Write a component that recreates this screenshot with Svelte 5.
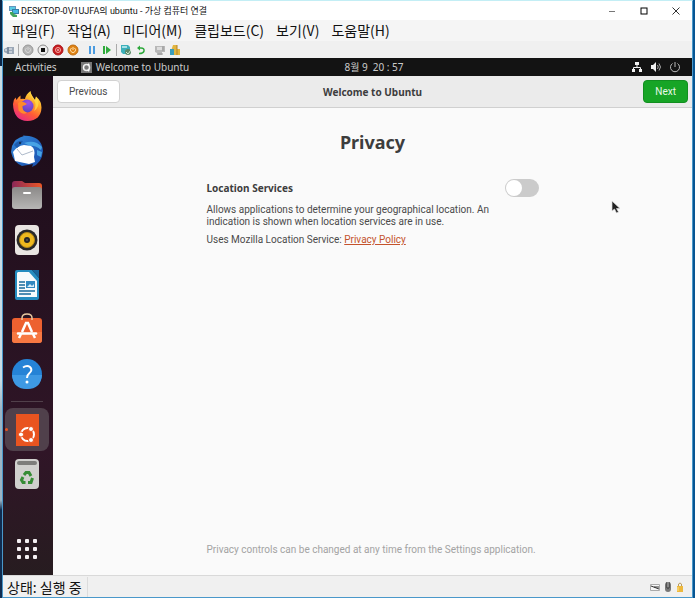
<script lang="ts">
	const menus = ["파일(F)", "작업(A)", "미디어(M)", "클립보드(C)", "보기(V)", "도움말(H)"];

	const apps = [
		{ id: "firefox", label: "Firefox" },
		{ id: "thunderbird", label: "Thunderbird" },
		{ id: "files", label: "Files" },
		{ id: "rhythmbox", label: "Rhythmbox" },
		{ id: "writer", label: "LibreOffice Writer" },
		{ id: "software", label: "Ubuntu Software" },
		{ id: "help", label: "Help" }
	];

	const cells = [0, 1, 2, 3, 4, 5, 6, 7, 8];

	let location = $state(false);
</script>

{#snippet appIcon(id : string)}
	<svg width="32" height="32" viewBox="0 0 32 32" aria-hidden="true">
		{#if id === "firefox"}
			<defs>
				<linearGradient id="ffBody" x1="0.85" y1="0" x2="0.25" y2="1">
					<stop offset="0" stop-color="#fff04a" />
					<stop offset="0.35" stop-color="#ffab2a" />
					<stop offset="0.65" stop-color="#ff5b35" />
					<stop offset="1" stop-color="#e8278b" />
				</linearGradient>
				<radialGradient id="ffCore" cx="0.6" cy="0.25" r="0.8">
					<stop offset="0" stop-color="#a050e8" />
					<stop offset="1" stop-color="#5743c0" />
				</radialGradient>
			</defs>
			<path d="M2 14 Q2 10 4.500 7.500 L5.500 10 Q7 7 9.500 5.500 L9.500 9 Q12 8.500 14 9 Q15 4 19.500 1 Q19.500 4 22 7 L24 10 L25 6.500 Q30.500 11 30.500 17.500 Q30 30.500 16.500 31 Q2.500 30.500 2 14Z" fill="url(#ffBody)" />
			<circle cx="16" cy="16" r="6.500" fill="url(#ffCore)" />
			<path d="M7 13 Q11 10 16 14 Q14 15.500 11.500 16 Q11 21 16 22.500 Q12 26 7.500 20.500Z" fill="#ff8a2a" />
			<path d="M19.500 1 Q19 6 23 10 Q26 15 23 21 Q29 17 27 10 L25 6.500 L24 10 Q20 6 19.500 1Z" fill="#ffe04a" opacity=".7" />
		{:else if id === "thunderbird"}
			<defs>
				<linearGradient id="tbBody" x1="0" y1="0" x2="1" y2="1">
					<stop offset="0" stop-color="#3489dc" />
					<stop offset="1" stop-color="#174caa" />
				</linearGradient>
			</defs>
			<path d="M0 17 L1 11 Q4 3 13 1 Q9 0 18 1 Q31 3 32 16 Q31 28 21 32 L22 29 L11 31 Q2 27 0 17Z" fill="url(#tbBody)" />
			<path d="M13 8 Q24 4 31 12 L30 15 Q24 10 19 11Z M26 15 L31 17 L30 22 L26 20Z" fill="#48a3e5" />
			<path d="M2 17 Q6 11 13 10 L20 11 Q25 14 23 22 L24 27 L18 29 L4 26 L3 21Z" fill="#fff" />
			<path d="M6 14 L11 20 L22 16" fill="none" stroke="#aebaca" />
			<path d="M3 10 Q7 5 12 6 Q10 10 6 13Z" fill="#1d5cae" />
			<circle cx="9" cy="8" r="1" fill="#10243c" />
		{:else if id === "files"}
			<defs>
				<linearGradient id="flBack">
					<stop offset="0" stop-color="#8b2858" />
					<stop offset="1" stop-color="#ec5726" />
				</linearGradient>
				<linearGradient id="flFront" x2="0" y2="1">
					<stop offset="0" stop-color="#8b8988" />
					<stop offset="1" stop-color="#b7b6b5" />
				</linearGradient>
			</defs>
			<path d="M1 5 Q1 2 4 2 H11 L14 4 H28 Q31 4 31 7 V14 H1Z" fill="url(#flBack)" />
			<rect x="1" y="8" width="30" height="22" rx="3" fill="url(#flFront)" />
			<rect x="12" y="13" width="8" height="2" rx="1" fill="#fff" />
		{:else if id === "rhythmbox"}
			<rect x="4" y="1" width="24" height="30" rx="4" fill="#e9e5e2" />
			<circle cx="16" cy="16" r="10.500" fill="#292929" />
			<circle cx="16" cy="16" r="7.500" fill="#eeb91e" stroke="#b78a17" />
			<circle cx="16" cy="16" r="3" fill="#272727" />
			<circle cx="16" cy="16" r="1" fill="#555" />
		{:else if id === "writer"}
			<path d="M6 1 H21 L28 9 V29 Q28 31 26 31 H6 Q4 31 4 29 V3 Q4 1 6 1Z" fill="#258cc0" />
			<path d="M7 3 H18 L26 12 V28 H6 V4Z" fill="#f7fafc" />
			<path d="M21 1 H28 V9Z" fill="#17649a" />
			<path d="M8 13 H14 M8 16 H14 M8 19 H14 M8 22 H24 M8 25 H20" stroke="#18699b" stroke-width="1.500" />
			<rect x="15" y="12" width="9" height="7" fill="#3288bf" />
			<path d="M16 18 L19 15 L21 17 L23 15 V18Z" fill="#d9edf8" />
		{:else if id === "software"}
			<rect x="1" y="5" width="30" height="25" rx="3" fill="#ed6130" />
			<path d="M1 19 H31 V27 Q31 30 28 30 H4 Q1 30 1 27Z" fill="#f77842" />
			<path d="M11 7 V5 Q11 1 16 1 Q21 1 21 5 V7" fill="none" stroke="#e8c8a0" stroke-width="1.500" />
			<path d="M11 19 L15 10 H17 L21 19" fill="none" stroke="#fff" stroke-width="2.500" />
			<path d="M7 20.500 H25" stroke="#fff" stroke-width="2.500" stroke-linecap="round" />
			<path d="M10 21 L8 25 M22 21 L24 25" stroke="#fff" stroke-width="2.500" />
		{:else if id === "help"}
			<circle cx="16" cy="16" r="15" fill="#2583d6" />
			<path d="M1 17 H31 Q30 31 16 31 Q2 31 1 17Z" fill="#3e99e4" />
			<path d="M12 9.500 Q16 7 19 9 Q22 12 18.500 15 Q16 17 16 20" fill="none" stroke="#fff" stroke-width="2" />
			<circle cx="16" cy="24" r="1.500" fill="#fff" />
		{:else if id === "ubuntu"}
			<path d="M5 0 H28 V32 H5Z" fill="#e95420" />
			<circle cx="16.500" cy="20.500" r="6.500" fill="none" stroke="#fff" stroke-width="2" />
			<g fill="#fff" stroke="#e95420">
				<circle cx="10" cy="20.500" r="2.500" />
				<circle cx="20" cy="15" r="2.500" />
				<circle cx="20" cy="26" r="2.500" />
			</g>
		{:else}
			<rect x="4" y="1" width="24" height="30" rx="4" fill="#d0d0ce" />
			<rect x="6" y="3" width="20" height="4" rx="2" fill="#7d7d7b" />
			<g fill="none" stroke="#358c35" stroke-width="3">
				<path d="M13 17 L15 14.500 H18 L20 18" />
				<path d="M21.500 20 L20 24.500 H17" />
				<path d="M14.500 24.500 H12 L10.500 22 L12 19" />
			</g>
		{/if}
	</svg>
{/snippet}

<div class="desktop">
	<div class="window">
		<header class="titlebar">
			<svg class="vm-icon" width="12" height="12" viewBox="0 0 12 12" aria-hidden="true">
				<path d="M1 1 H8 V6 H1Z" fill="#6595bc" />
				<path d="M2 2 H7 V5 H2Z" fill="#58cce4" />
				<path d="M4 4 H11 V9 H4Z" fill="#367da9" />
				<path d="M5 5 H10 V8 H5Z" fill="#46b9e2" />
				<path d="M2 7 L5 7 L6 9 L9 10 V12 H5 L2 9Z" fill="#43a45b" />
			</svg>
			<span class="window-title">DESKTOP-0V1UJFA의 ubuntu - 가상 컴퓨터 연결</span>
			<div class="window-buttons">
				<button aria-label="최소화"><svg width="8" height="8"><path d="M1 4.500 H7" stroke="#777" /></svg></button>
				<button aria-label="최대화"><svg width="8" height="8"><rect x="1" y="1" width="6" height="6" fill="none" stroke="#000" /></svg></button>
				<button aria-label="닫기"><svg width="8" height="8"><path d="M0.500 0.500 L7.500 7.500 M7.500 0.500 L0.500 7.500" stroke="#333" /></svg></button>
			</div>
		</header>

		<nav class="menubar">
			{#each menus as menu}
				<button>{menu}</button>
			{/each}
		</nav>

		<div class="toolbar">
			<button aria-label="Ctrl+Alt+Del">
				<svg width="12" height="12"><path d="M1 5 L5 3 L11 3 V10 H5 L1 8Z" fill="#9ca8b7" /><path d="M2 6 H4 M6 5 H9 M6 8 H9" stroke="#f4f6fa" /><path d="M5 3 V10" stroke="#5f7087" /></svg>
			</button>
			<span class="divider"></span>
			<button aria-label="시작">
				<svg width="12" height="12"><circle cx="6" cy="6" r="5" fill="#b4b4b4" stroke="#989898" /><path d="M4.500 4 A2.500 2.500 0 1 0 7.500 4 M6 3 V6" fill="none" stroke="#d5d5d5" /></svg>
			</button>
			<button aria-label="끄기">
				<svg width="12" height="12"><circle cx="6" cy="6" r="5" fill="#eee" stroke="#888" /><path d="M4 4 H8 V8 H4Z" fill="#111" /></svg>
			</button>
			<button aria-label="종료">
				<svg width="12" height="12"><circle cx="6" cy="6" r="5" fill="#c91c20" stroke="#a91418" /><circle cx="6" cy="6" r="2.500" fill="none" stroke="#f6b0a7" /><path d="M5 6 H7" stroke="#fff" /></svg>
			</button>
			<button aria-label="저장">
				<svg width="12" height="12"><circle cx="6" cy="6" r="5" fill="#df8213" stroke="#bd6c12" /><path d="M4.500 4 A2.500 2.500 0 1 0 7.500 4 M6 3 V6" fill="none" stroke="#ffe1ae" /></svg>
			</button>
			<span class="divider blank"></span>
			<button aria-label="일시 중지">
				<svg width="12" height="12"><path d="M3 2 H5 V10 H3Z M7 2 H9 V10 H7Z" fill="#4b9be0" /></svg>
			</button>
			<button aria-label="다시 설정">
				<svg width="12" height="12"><path d="M2 2 H4 V10 H2Z M5 2 L10 6 L5 10Z" fill="#2faa3c" /></svg>
			</button>
			<span class="divider"></span>
			<button aria-label="검사점">
				<svg width="12" height="12"><path d="M1 1 H8 L10 3 V10 H3 L1 8Z" fill="#3cafba" /><path d="M2 2 H7 V4 H2Z" fill="#a6e1e6" /><circle cx="8" cy="8" r="3" fill="#5a8869" /><path d="M6 8 L8 10 L11 6" fill="none" stroke="#d3ebd7" /></svg>
			</button>
			<button aria-label="되돌리기">
				<svg width="12" height="12"><path d="M4 4 H6 Q9.500 4 9 7 Q8.500 9.500 4 9.500" fill="none" stroke="#2da83b" stroke-width="1.500" /><path d="M2 4 L5 1.500 V6.500Z" fill="#2da83b" /></svg>
			</button>
			<span class="divider blank"></span>
			<button aria-label="고급 세션">
				<svg width="12" height="12"><path d="M1 2 H11 V8 H8 V11 H3 V9 L1 8Z" fill="#b8b8b8" /><path d="M3 3 H8 V6 H3Z" fill="#ddd" /><path d="M9 2 V7 M4 10 H9" stroke="#999" /></svg>
			</button>
			<button aria-label="공유">
				<svg width="12" height="12"><path d="M4 1 H8 V5 H11 V11 H5 V7 H2Z" fill="#e2b641" /><path d="M1 5 H5 V11 H1Z" fill="#3a9dbc" /><path d="M8 1 V11" stroke="#b58226" /></svg>
			</button>
		</div>

		<section class="guest">
			<div class="topbar">
				<div class="topbar-left">
					<button>Activities</button>
					<button class="app-menu">
						<svg width="11" height="11" aria-hidden="true">
							<rect width="11" height="11" fill="#777" />
							<circle cx="5.500" cy="5.500" r="3" fill="none" stroke="#eee" stroke-width="1.500" />
							<path d="M2 5.500 H3 M7 2 L8 3 M7 9 L8 8" stroke="#fff" stroke-width="2" />
						</svg>
						Welcome to Ubuntu
					</button>
				</div>
				<time>8월 9&ensp;20 : 57</time>
				<div class="tray">
					<svg width="12" height="12" aria-hidden="true"><path d="M4 1 H8 V4 H4Z M1 8 H4 V11 H1Z M8 8 H11 V11 H8Z" fill="#f1f1f1" /><path d="M6 4 V6 M2.500 8 V6.500 H9.500 V8" fill="none" stroke="#f1f1f1" /></svg>
					<svg width="12" height="12" aria-hidden="true"><path d="M1 4 H3 L6 1 V11 L3 8 H1Z" fill="#f1f1f1" /><path d="M7.500 4 Q9 6 7.500 8 M9 2.500 Q12 6 9 9.500" fill="none" stroke="#aaa" /></svg>
					<svg width="12" height="12" aria-hidden="true"><path d="M3.500 2.500 A4.500 4.500 0 1 0 8.500 2.500 M6 1 V6" fill="none" stroke="#bbb" /></svg>
				</div>
			</div>

			<div class="session">
				<aside class="dock">
					<div class="favorites">
						{#each apps as app}
							<button aria-label={app.label}>{@render appIcon(app.id)}</button>
						{/each}
					</div>
					<hr />
					<button class="running" aria-label="Welcome to Ubuntu">{@render appIcon("ubuntu")}</button>
					<button class="trash" aria-label="Trash">{@render appIcon("trash")}</button>
					<button class="show-apps" aria-label="Show Applications">
						<svg width="22" height="22" aria-hidden="true">
							{#each cells as cell}
								<rect x={(cell % 3) * 8 + 1} y={Math.floor(cell / 3) * 8 + 1} width="4" height="4" rx="1" fill="#f5f0f3" />
							{/each}
						</svg>
					</button>
				</aside>

				<main>
					<div class="headerbar">
						<button class="action">Previous</button>
						<h1>Welcome to Ubuntu</h1>
						<button class="action next">Next</button>
					</div>

					<div class="page">
						<h2>Privacy</h2>
						<div class="setting">
							<label for="location">Location Services</label>
							<input id="location" type="checkbox" role="switch" bind:checked={location} />
						</div>
						<p>Allows applications to determine your geographical location. An indication is shown when location services are in use.</p>
						<p>Uses Mozilla Location Service: <a href="#privacy">Privacy Policy</a></p>
						<p class="hint">Privacy controls can be changed at any time from the Settings application.</p>
					</div>

					<svg class="pointer" width="10" height="15" viewBox="0 0 10 15" aria-hidden="true">
						<path d="M1 1 V11 L3.500 9 L5.500 13 L7.500 12 L5.500 8.500 H9Z" fill="#222" stroke="#ddd" stroke-width="0.700" />
					</svg>
				</main>
			</div>
		</section>

		<footer>
			<span class="status">상태: 실행 중</span>
			<div class="indicators">
				<svg width="10" height="10" aria-hidden="true"><path d="M0.500 2.500 H9.500 V8.500 H0.500Z" fill="#f7f7f7" stroke="#aaa" /><path d="M1 4 L9 7 M4 5 H9" stroke="#333" /></svg>
				<svg width="8" height="10" aria-hidden="true"><rect x="1" width="6" height="10" rx="3" fill="#777" /><path d="M3 0 V6 H5 V0" fill="#ddd" stroke="#333" /></svg>
				<svg width="8" height="10" aria-hidden="true"><path d="M2.500 5 V2 Q4 0 5.500 2 V5" fill="none" stroke="#b99c5e" /><path d="M1 4 H7 V10 H1Z" fill="#edb83d" /><path d="M2 5 V9" stroke="#ffe185" /></svg>
			</div>
		</footer>
	</div>
</div>

<style>
	:global(body) {
		margin: 0;
	}

	* {
		box-sizing: border-box;
	}

	button {
		border: 0;
		padding: 0;
		background: none;
		color: inherit;
		font: inherit;
	}

	svg {
		display: block;
		flex: none;
	}

	.desktop {
		display: flex;
		min-height: 100vh;
		padding: 0 2px;
		background: linear-gradient(90deg, transparent 50%, #0870bd 50%, #1ba0df 60%, #075593),
			linear-gradient(#0b2647 0 66px, #c9dce5 66px 380px, #9db4c4 410px 500px, #102c50 510px);
	}

	.window {
		display: flex;
		flex: 1;
		flex-direction: column;
		min-width: 0;
		border: 1px solid #4a98ca;
		border-top-color: #c3eef5;
		background: #f0f0f0;
		color: #111;
		font-family: "Noto Sans", "Noto Sans CJK KR", sans-serif;
	}

	.titlebar {
		display: flex;
		align-items: center;
		height: 19px;
		padding-left: 5px;
		background: #fff;
		font: 9px/16px Roboto, "Noto Sans CJK KR", sans-serif;
	}

	.window-title {
		margin-left: 1px;
	}

	.window-buttons {
		display: flex;
		margin-left: auto;
	}

	.window-buttons button {
		display: grid;
		place-items: center;
		width: 32px;
		height: 18px;
	}

	.menubar {
		display: flex;
		gap: 12px;
		height: 21px;
		padding-left: 9px;
		background: #f5f5f5;
		font: 14px/21px "Noto Sans CJK KR", sans-serif;
		white-space: nowrap;
	}

	.toolbar {
		display: flex;
		align-items: center;
		gap: 3px;
		height: 17px;
	}

	.divider {
		width: 1px;
		height: 12px;
		background: #aaa;
	}

	.divider.blank {
		background: transparent;
	}

	.guest {
		display: flex;
		flex: 1;
		flex-direction: column;
	}

	.topbar {
		display: grid;
		grid-template-columns: 1fr auto 1fr;
		align-items: center;
		height: 18px;
		padding: 0 11px 0 12px;
		background: #131313;
		color: #ccc;
		font-size: 10px;
		line-height: 18px;
	}

	.topbar-left {
		display: flex;
		gap: 24px;
	}

	time {
		margin-left: 52px;
	}

	.app-menu {
		display: flex;
		align-items: center;
		gap: 4px;
	}

	.tray {
		display: flex;
		justify-content: flex-end;
		gap: 7px;
	}

	.session {
		display: flex;
		flex: 1;
	}

	.dock {
		display: flex;
		flex: none;
		flex-direction: column;
		align-items: center;
		width: 50px;
		padding: 8px 2px 15px 0;
		background: linear-gradient(#1b0b18, #281322 50%, #301527 75%, #271c20);
	}

	.favorites {
		display: grid;
		grid-auto-rows: 1fr;
		min-height: 312px;
		place-items: center;
	}

	hr {
		width: 32px;
		height: 1px;
		margin: 5px 0 6px;
		border: 0;
		background: #51404b;
	}

	.running {
		position: relative;
		display: grid;
		place-items: center;
		width: 44px;
		height: 43px;
		border-radius: 8px;
		background: #50404b;
	}

	.running::before {
		position: absolute;
		top: 20px;
		left: 0;
		width: 3px;
		height: 3px;
		border-radius: 2px;
		background: #e95420;
		content: "";
	}

	.trash {
		margin-top: 7px;
	}

	.show-apps {
		margin-top: auto;
	}

	main {
		position: relative;
		display: flex;
		flex: 1;
		flex-direction: column;
		min-width: 0;
		background: #fafafa;
		color: #4b4b4b;
		font-family: Roboto, sans-serif;
		font-size: 10px;
	}

	.headerbar {
		display: grid;
		grid-template-columns: 1fr auto 1fr;
		align-items: center;
		height: 32px;
		padding: 0 4px;
		border-bottom: 1px solid #d0d0d0;
		background: #ebebeb;
	}

	h1 {
		margin: 0;
		color: #3d3d3d;
		font-family: "Noto Sans", sans-serif;
		font-size: 10px;
		line-height: 16px;
	}

	.action {
		justify-self: start;
		height: 23px;
		padding: 0 11px;
		border: 1px solid #d2d2d2;
		border-radius: 4px;
		background: #fff;
	}

	.next {
		justify-self: end;
		border-color: #128f20;
		background: #17a526;
		color: #e9f8e9;
	}

	.page {
		display: flex;
		flex: 1;
		flex-direction: column;
		width: 100%;
		max-width: 332px;
		margin: 0 auto;
		padding: 21px 0 18px;
	}

	h2 {
		margin: 0 0 24px;
		color: #3d3d3d;
		font-family: "Noto Sans", sans-serif;
		font-size: 18px;
		line-height: 26px;
		text-align: center;
	}

	.setting {
		display: flex;
		align-items: center;
		justify-content: space-between;
		height: 18px;
		margin-bottom: 7px;
		color: #3d3d3d;
		font-family: "Noto Sans", sans-serif;
		font-weight: bold;
	}

	input {
		width: 34px;
		height: 18px;
		margin: 0;
		padding: 1px;
		border-radius: 9px;
		background: #cbcbcb;
		appearance: none;
	}

	input::before {
		display: block;
		width: 16px;
		height: 16px;
		border-radius: 8px;
		background: #fff;
		content: "";
	}

	input:checked {
		background: #17a526;
	}

	input:checked::before {
		margin-left: auto;
	}

	p {
		max-width: 300px;
		margin: 0 0 6px;
		line-height: 12px;
	}

	a {
		color: #c4532c;
	}

	.hint {
		max-width: none;
		margin: auto 0 0;
		color: #a3a3a3;
		line-height: 14px;
		white-space: nowrap;
	}

	.pointer {
		position: absolute;
		top: 124px;
		left: 558px;
	}

	footer {
		display: flex;
		align-items: center;
		justify-content: space-between;
		height: 22px;
		padding: 0 8px 0 4px;
		border-top: 1px solid #d9d9d9;
		font: 14px/20px "Noto Sans CJK KR", sans-serif;
	}

	.status {
		padding-right: 5px;
		border-right: 1px solid #dcdcdc;
	}

	.indicators {
		display: flex;
		gap: 4px;
	}
</style>
